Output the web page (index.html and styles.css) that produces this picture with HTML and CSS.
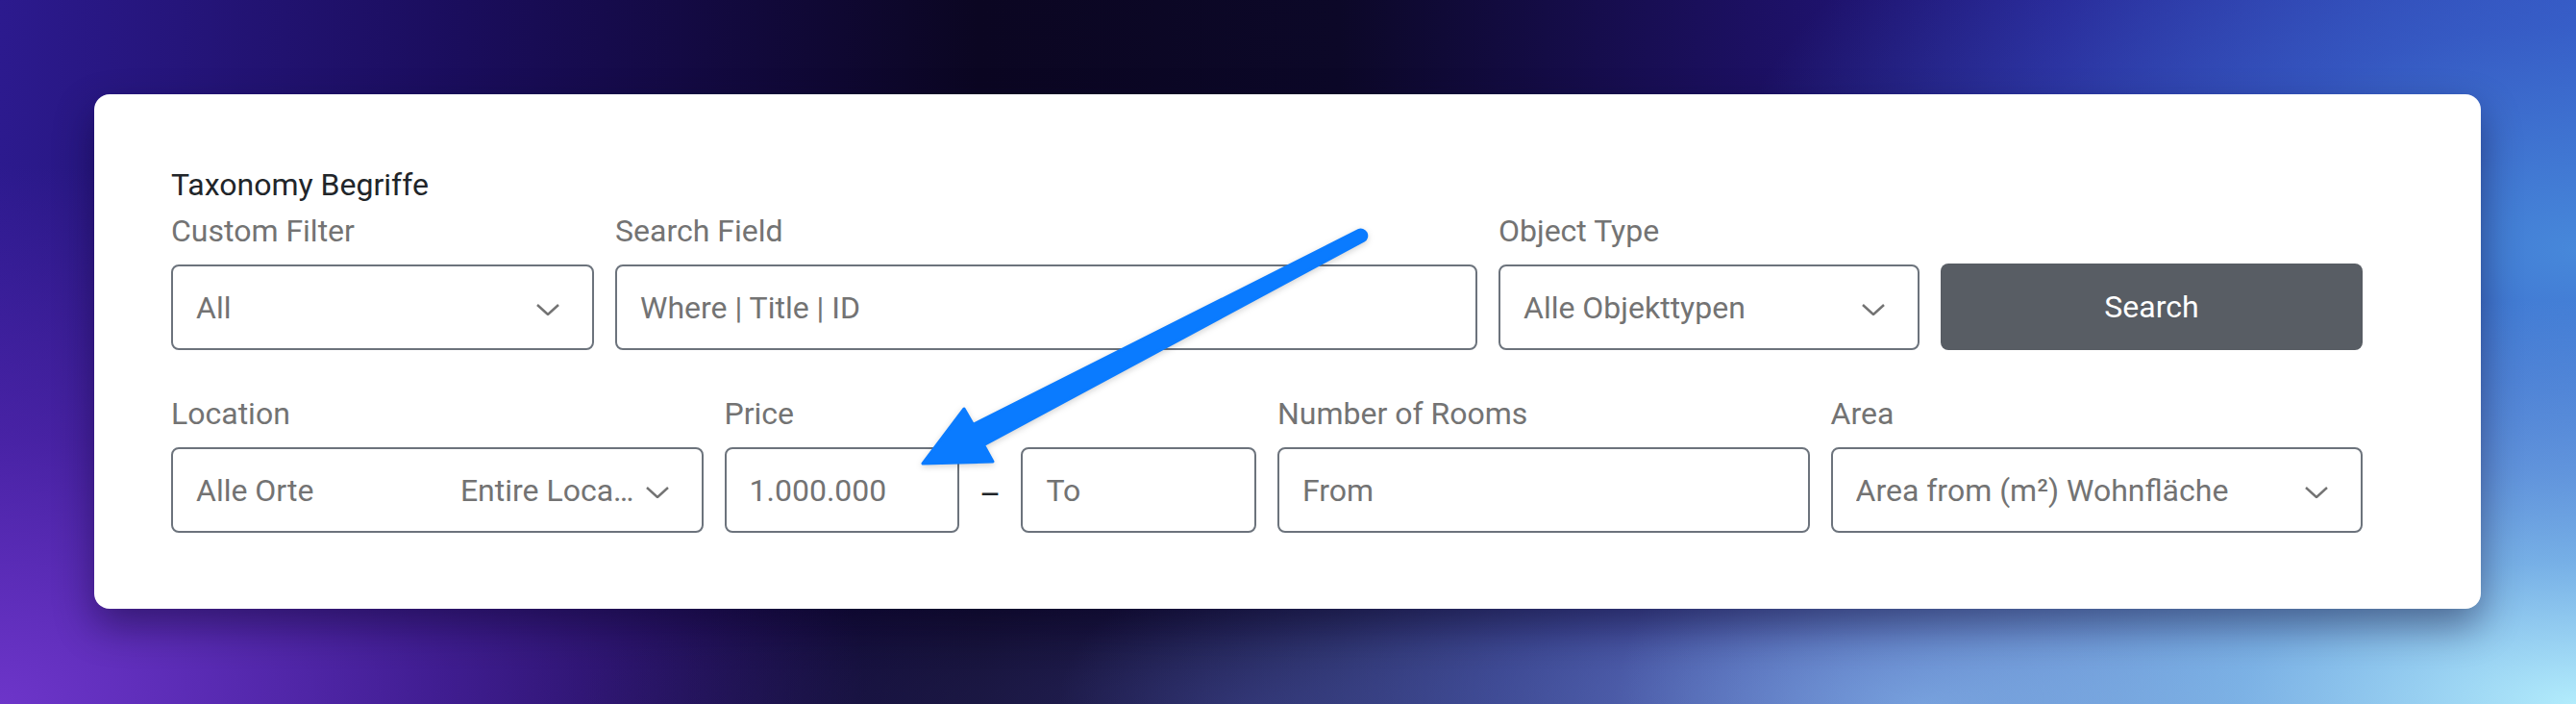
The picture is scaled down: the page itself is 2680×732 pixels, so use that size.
FILE: index.html
```html
<!DOCTYPE html>
<html lang="de">
<head>
  <meta charset="UTF-8" />
  <meta name="viewport" content="width=device-width, initial-scale=1.0"/>
  <title>Immobiliensuche</title>
  <link rel="stylesheet" href="styles.css">
</head>
<body>

  <!-- FILTER -->
  <div class="stage">
    <form class="filter-card">
      <div class="taxonomy">Taxonomy Begriffe</div>

      <div class="row row-top">
        <div class="field">
          <label>Custom Filter</label>
          <div class="select">
            <span class="select-value">All</span>
            <svg class="chev" viewBox="0 0 24 12"><path d="M1 1 L12 11 L23 1"/></svg>
          </div>
        </div>
        <div class="field">
          <label>Search Field</label>
          <input class="input" type="text" placeholder="Where | Title | ID">
        </div>
        <div class="field">
          <label>Object Type</label>
          <div class="select">
            <span class="select-value">Alle Objekttypen</span>
            <svg class="chev" viewBox="0 0 24 12"><path d="M1 1 L12 11 L23 1"/></svg>
          </div>
        </div>
        <div class="field field-btn">
          <button type="button" class="btn-search">Search</button>
        </div>
      </div>

      <div class="row row-bottom">
        <div class="field">
          <label>Location</label>
          <div class="select">
            <span class="select-value">Alle Orte</span>
            <span class="select-sub">Entire Loca…</span>
            <svg class="chev" viewBox="0 0 24 12"><path d="M1 1 L12 11 L23 1"/></svg>
          </div>
        </div>
        <div class="field">
          <label>Price</label>
          <div class="range">
            <input class="input" type="text" value="1.000.000">
            <span class="range-sep">–</span>
            <input class="input" type="text" placeholder="To">
          </div>
        </div>
        <div class="field">
          <label>Number of Rooms</label>
          <input class="input" type="text" placeholder="From">
        </div>
        <div class="field">
          <label>Area</label>
          <div class="select">
            <span class="select-value">Area from (m²) Wohnfläche</span>
            <svg class="chev" viewBox="0 0 24 12"><path d="M1 1 L12 11 L23 1"/></svg>
          </div>
        </div>
      </div>
    </form>
  </div>

  <!-- seta -->
  <svg class="arrow" viewBox="0 0 2680 732">
    <path d="M1413.2 239.7 L1012.5 441.4 L1003 425 L960 482 L1033 480 L1023.5 462.6 L1418.8 250.3 A6 6 0 0 0 1413.2 239.7 Z"/>
  </svg>

</body>
</html>
```

FILE: styles.css
```css
* {
  margin: 0;
  padding: 0;
  box-sizing: border-box;
}

html, body {
  width: 2680px;
  height: 732px;
  overflow: hidden;
}

body {
  position: relative;
  font-family: Roboto, 'Liberation Sans', Arial, sans-serif;
  color: #212529;
  background:
    radial-gradient(ellipse 1000px 420px at 2680px 732px, #b2ecfc 0%, rgba(140, 205, 242, 0.75) 35%, rgba(110, 170, 230, 0) 100%),
    radial-gradient(ellipse 900px 520px at 2680px 260px, #4788da 0%, rgba(60, 110, 210, 0.6) 45%, rgba(50, 80, 190, 0) 100%),
    radial-gradient(ellipse 900px 280px at 2000px 732px, #6a86d0 0%, rgba(90, 115, 205, 0.55) 50%, rgba(60, 70, 170, 0) 100%),
    radial-gradient(ellipse 700px 160px at 1300px 732px, rgba(40, 38, 95, 0.9) 0%, rgba(30, 28, 80, 0) 100%),
    radial-gradient(ellipse 900px 560px at 0 732px, #6d35c9 0%, rgba(90, 40, 180, 0.6) 50%, rgba(70, 30, 160, 0) 100%),
    linear-gradient(90deg, #2c1a8e 0%, #1a0d5c 18%, #0b0622 38%, #0c0828 52%, #1c1062 68%, #24188a 80%, #2f46b8 100%);
}

.stage {
  padding: 98px 99px 0 98px;
}

.filter-card {
  background: #fff;
  border-radius: 16px;
  padding: 70px 123px 79px 80px;
  box-shadow: 0 18px 40px rgba(10, 5, 40, 0.45);
}

.taxonomy {
  font-size: 32px;
  line-height: 48px;
  color: #212529;
}

.row {
  display: grid;
  column-gap: 22px;
}

.row-top {
  grid-template-columns: 440px 897px 438px 439px;
}

.row-bottom {
  grid-template-columns: repeat(4, 1fr);
  margin-top: 42px;
}

.field {
  display: flex;
  flex-direction: column;
  min-width: 0;
}

.field label {
  font-size: 32px;
  line-height: 48px;
  color: #737373;
  margin-bottom: 11px;
}

.field-btn {
  justify-content: flex-end;
}

.input,
.select {
  height: 89px;
  width: 100%;
  border: 2px solid #6c737c;
  border-radius: 8px;
  background: #fff;
  padding: 0 34px 0 24px;
  font-family: inherit;
  font-size: 32px;
  line-height: 48px;
  color: #737373;
}

.input::placeholder {
  color: #737373;
  opacity: 1;
}

.input:focus {
  outline: none;
}

.select {
  display: flex;
  align-items: center;
  cursor: pointer;
}

.select-value {
  flex: 1;
  white-space: nowrap;
  overflow: hidden;
}

.select-sub {
  white-space: nowrap;
  margin-right: 12px;
}

.chev {
  width: 24px;
  height: 12px;
  margin-top: 5px;
  flex-shrink: 0;
}

.chev path {
  fill: none;
  stroke: #737373;
  stroke-width: 2.5;
}

.range {
  display: flex;
  align-items: center;
}

.range .input {
  flex: 1;
  min-width: 0;
}

.range-sep {
  margin: 8px 21px 0;
  font-size: 34px;
  line-height: 48px;
  color: #212529;
}

.btn-search {
  height: 90px;
  width: 100%;
  border: none;
  border-radius: 8px;
  background-color: #585d64;
  color: #fff;
  font-family: inherit;
  font-size: 32px;
  cursor: pointer;
}

.btn-search:hover {
  background-color: #4a4e54;
}

.arrow {
  position: absolute;
  top: 0;
  left: 0;
  width: 2680px;
  height: 732px;
  pointer-events: none;
  filter: drop-shadow(0 2px 3px rgba(0, 0, 0, 0.18));
}

.arrow path {
  fill: #0a7bff;
  stroke: #0a7bff;
  stroke-width: 3;
  stroke-linejoin: round;
}
```
